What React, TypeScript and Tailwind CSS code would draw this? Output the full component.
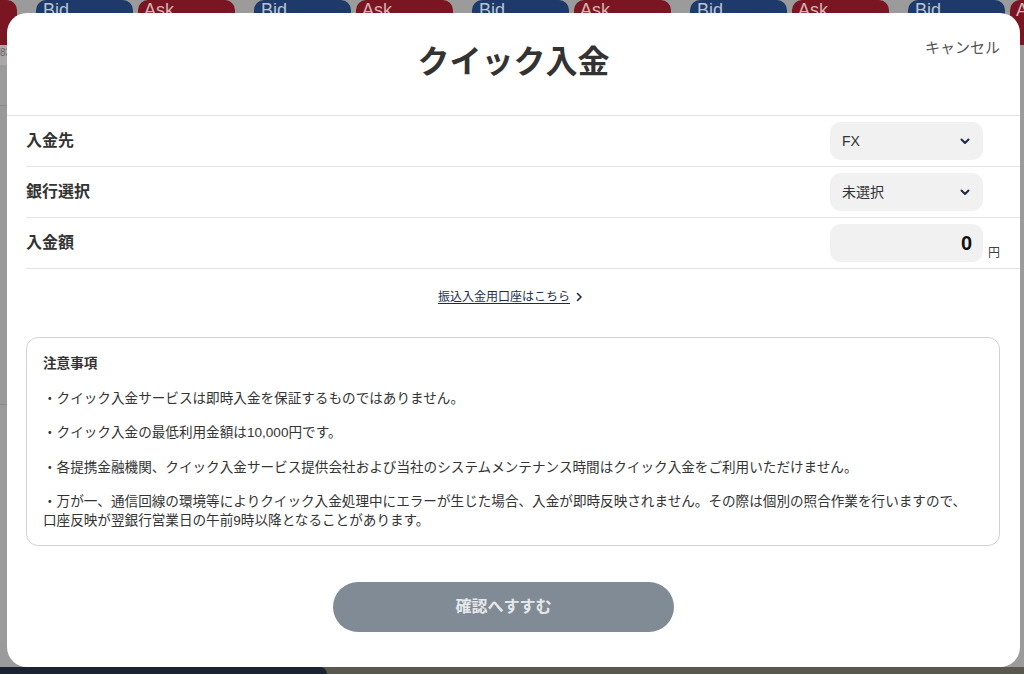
const pairs = [0, 1, 2, 3, 4, 5, 6];

const notes = [
  "・クイック入金サービスは即時入金を保証するものではありません。",
  "・クイック入金の最低利用金額は10,000円です。",
  "・各提携金融機関、クイック入金サービス提供会社および当社のシステムメンテナンス時間はクイック入金をご利用いただけません。",
];

function Chevron() {
  return (
    <svg width="10" height="7" viewBox="0 0 10 7" className="shrink-0">
      <polyline points="1.5,1.5 5,5 8.5,1.5" fill="none" stroke="#1f2a44" strokeWidth="2" strokeLinecap="round" strokeLinejoin="round" />
    </svg>
  );
}

function SelectBox({ value }: { value: string }) {
  return (
    <div className="flex h-[38px] w-[153px] items-center justify-between rounded-[11px] bg-[#f1f1f1] pl-[12px] pr-[13px] text-[14px] text-[#333]">
      <span>{value}</span>
      <Chevron />
    </div>
  );
}

function Row({ label, children, unit }: { label: string; children: React.ReactNode; unit?: string }) {
  return (
    <div className="flex h-[51px] items-center justify-between border-b border-[#e4e4e4] pr-[20px]">
      <span className="text-[16px] font-bold text-[#333]">{label}</span>
      <div className="flex items-center">
        {children}
        <span className="flex h-[38px] w-[17px] items-end justify-end pb-[1px] text-[12px] leading-[16px] text-[#444]">
          {unit}
        </span>
      </div>
    </div>
  );
}

export default function App() {
  return (
    <div className="relative h-[674px] w-[1024px] overflow-hidden bg-[#9b9b9b] font-['Liberation_Sans','Noto_Sans_CJK_JP',sans-serif]">
      {/* dimmed page behind the dialog */}
      <div className="ml-[-182px] flex gap-[19px]">
        {pairs.map((i) => (
          <div key={i} className="flex gap-[5px]">
            <div className="h-[45px] w-[97px] rounded-[10px] bg-[#1e3a6a] pl-[7px] pt-[1px] text-[18px] leading-none text-[#b9c3d1]">
              Bid
            </div>
            <div className="h-[45px] w-[97px] rounded-[10px] bg-[#7a1621] pl-[6px] pt-[1px] text-[18px] leading-none text-[#d9b3b7]">
              Ask
            </div>
          </div>
        ))}
      </div>
      <div className="h-[20px] w-[8px] bg-[#a9a9a9] text-[10px] text-[#666]">83</div>
      <div className="mt-[40px] h-[300px] w-[8px] border-y border-[#8a8a8a] bg-[#999]" />
      <div className="absolute bottom-0 left-0 flex h-[7px] w-full bg-[#58584f]">
        <div className="h-full w-[327px] rounded-tr-[8px] bg-[#1b2231]" />
      </div>

      {/* dialog */}
      <div className="absolute left-[7px] top-[13px] flex h-[654px] w-[1013px] flex-col rounded-[20px] bg-white text-[#333]">
        <div className="relative flex h-[103px] items-center justify-center border-b border-[#e4e4e4] pb-[4px]">
          <h1 className="text-[32px] font-bold leading-[40px] text-[#333]">クイック入金</h1>
          <span className="absolute right-[20px] top-[25px] text-[15px] leading-[20px] text-[#555]">キャンセル</span>
        </div>

        <div className="ml-[19px]">
          <Row label="入金先">
            <SelectBox value="FX" />
          </Row>
          <Row label="銀行選択">
            <SelectBox value="未選択" />
          </Row>
          <Row label="入金額" unit="円">
            <div className="flex h-[38px] w-[153px] items-center justify-end rounded-[11px] bg-[#f1f1f1] pr-[11px] text-[20px] font-bold text-[#111]">
              0
            </div>
          </Row>
        </div>

        <div className="mt-[20px] flex items-center justify-center gap-[6px] pr-[6px] text-[12px] leading-[16px] text-[#1a2d4d]">
          <span className="underline underline-offset-2">振込入金用口座はこちら</span>
          <svg width="7" height="10" viewBox="0 0 7 10">
            <polyline points="1.5,1.5 5,5 1.5,8.5" fill="none" stroke="#1f2a44" strokeWidth="1.6" strokeLinecap="round" strokeLinejoin="round" />
          </svg>
        </div>

        <div className="ml-[19px] mr-[20px] mt-[32px] rounded-[12px] border border-[#d2d2d2] px-[16px] pb-[15px] pt-[16px] text-[13.6px] leading-[19px] text-[#333]">
          <p className="font-bold">注意事項</p>
          {notes.map((n) => (
            <p key={n} className="mt-[15.5px]">
              {n}
            </p>
          ))}
          <p className="mt-[15.5px]">
            ・万が一、通信回線の環境等によりクイック入金処理中にエラーが生じた場合、入金が即時反映されません。その際は個別の照合作業を行いますので、
            <br />
            口座反映が翌銀行営業日の午前9時以降となることがあります。
          </p>
        </div>

        <button className="ml-[326px] mt-[36px] flex h-[50px] w-[341px] items-center justify-center rounded-full bg-[#808b96] text-[16px] font-bold text-[#e6e8ea]">
          確認へすすむ
        </button>
      </div>
    </div>
  );
}
